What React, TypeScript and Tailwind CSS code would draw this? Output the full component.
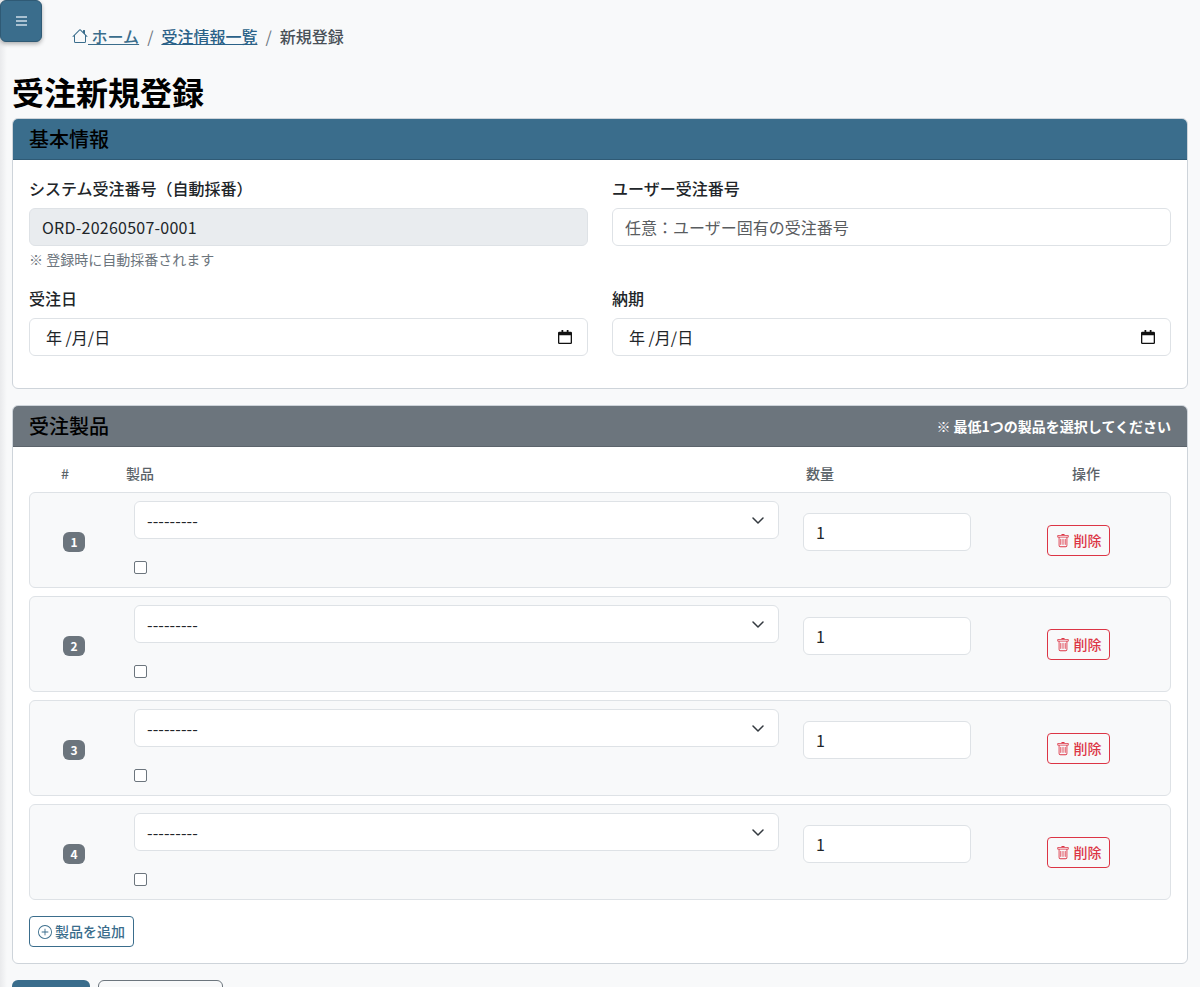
import { BsHouse, BsPlusCircle, BsTrash } from "react-icons/bs"

const fieldClass =
  "block w-full h-[38px] rounded-[6px] border border-[#dee2e6] px-[12px] text-[16px] text-[#212529] outline-none"
const inputClass = `${fieldClass} bg-white`

function DateField({ label }: { label: string }) {
  return (
    <div>
      <div className="mb-[9px] text-[16px] leading-[22px] font-medium text-[#212529]">{label}</div>
      <div className={`${inputClass} flex items-center justify-between`}>
        <span className="pl-[4px]">年 /月/日</span>
        <svg viewBox="0 0 16 16" className="mr-[3px] h-[14px] w-[14px]" fill="#111">
          <path d="M4 0h2v2h4V0h2v2h2.500A1.500 1.500 0 0 1 16 3.500v11a1.500 1.500 0 0 1-1.500 1.500h-13A1.500 1.500 0 0 1 0 14.500v-11A1.500 1.500 0 0 1 1.500 2H4V0zM1.500 6v8.500h13V6h-13z" />
        </svg>
      </div>
    </div>
  )
}

function ProductRow({ n }: { n: number }) {
  return (
    <div className="flex h-[96px] rounded-[6px] border border-[#dee2e6] bg-[#f8f9fa]">
      <div className="flex w-[88px] items-center justify-center pt-[4px]">
        <span className="flex h-[20px] w-[22px] items-center justify-center rounded-[6px] bg-[#6c757d] text-[12px] font-bold text-white">
          {n}
        </span>
      </div>
      <div className="ml-[16px] w-[645px] pt-[8px]">
        <div className="relative">
          <select className={`${inputClass} appearance-none tracking-[0.1px]`} defaultValue="">
            <option value="">---------</option>
          </select>
          <svg
            viewBox="0 0 16 16"
            className="pointer-events-none absolute right-[13px] top-[11px] h-[16px] w-[16px]"
            fill="none"
            stroke="#343a40"
            strokeWidth="1.500"
            strokeLinecap="round"
            strokeLinejoin="round"
          >
            <path d="m3 6 5 5 5-5" />
          </svg>
        </div>
        <input
          type="checkbox"
          className="mt-[22px] block h-[13px] w-[13px] appearance-none rounded-[2px] border border-[#6c757d] bg-white"
        />
      </div>
      <div className="ml-[24px] w-[168px] pt-[20px]">
        <input type="number" defaultValue={1} className={`${inputClass} appearance-none`} />
      </div>
      <div className="ml-[76px] pt-[32px]">
        <button className="flex h-[31px] w-[63px] items-center justify-center gap-[4px] rounded-[4px] border border-[#dc3545] text-[14px] font-medium text-[#dc3545]">
          <BsTrash className="h-[14px] w-[14px]" />
          削除
        </button>
      </div>
    </div>
  )
}

export default function App() {
  return (
    <div
      className="relative min-h-[987px] overflow-hidden bg-[#f8f9fa] px-[12px] text-[#212529]"
      style={{ fontFamily: '"Noto Sans CJK JP", "Noto Sans", sans-serif' }}
    >
      {/* sidebar shadow + toggle */}
      <div className="absolute left-0 top-0 h-full w-[7px] bg-gradient-to-r from-[#e9eaec] to-[#f8f9fa]" />
      <button className="absolute left-0 top-0 flex h-[42px] w-[42px] items-center justify-center rounded-[6px] border border-[#2f5a75] bg-[#3a6d8c] text-[#a9c1d1] shadow-[0_2px_4px_rgba(0,0,0,0.3)]">
        <span className="flex w-[11px] flex-col gap-[2px]">
          <span className="h-[2px] bg-[#a9c1d1]" />
          <span className="h-[2px] bg-[#a9c1d1]" />
          <span className="h-[2px] bg-[#a9c1d1]" />
        </span>
      </button>

      <nav className="relative flex h-[72px] items-center pl-[60px] text-[16px]">
        <a className="flex items-center font-medium text-[#3a6d8c] underline">
          <BsHouse className="h-[16px] w-[16px]" />
          <span>&nbsp;ホーム</span>
        </a>
        <span className="px-[8px] text-[#6c757d]">/</span>
        <a className="font-medium text-[#2a6188] underline">受注情報一覧</a>
        <span className="px-[8px] text-[#6c757d]">/</span>
        <span className="font-medium text-[#495057]">新規登録</span>
      </nav>

      <h1 className="relative h-[46px] text-[32px] leading-[38px] font-bold text-black">受注新規登録</h1>

      <section className="relative h-[271px] overflow-hidden rounded-[6px] border border-[#ced4da] bg-white">
        <div className="flex h-[41px] items-center border-b border-[#2f5a75] bg-[#3a6d8c] px-[16px]">
          <h2 className="text-[20px] font-medium text-black">基本情報</h2>
        </div>
        <div className="grid grid-cols-2 gap-x-[24px] px-[16px] pt-[17px]">
          <div>
            <div className="mb-[9px] text-[16px] leading-[22px] font-medium">システム受注番号（自動採番）</div>
            <div className={`${fieldClass} flex items-center bg-[#e9ecef] tracking-[0.24px]`}>ORD-20260507-0001</div>
            <div className="mt-[3px] text-[14px] leading-[20px] text-[#6c757d]">※ 登録時に自動採番されます</div>
          </div>
          <div>
            <div className="mb-[9px] text-[16px] leading-[22px] font-medium">ユーザー受注番号</div>
            <input className={`${inputClass} placeholder:text-[#595c5f]`} placeholder="任意：ユーザー固有の受注番号" />
          </div>
          <div className="mt-[18px]">
            <DateField label="受注日" />
          </div>
          <div className="mt-[18px]">
            <DateField label="納期" />
          </div>
        </div>
      </section>

      <section className="relative mt-[16px] h-[559px] overflow-hidden rounded-[6px] border border-[#ced4da] bg-white">
        <div className="flex h-[41px] items-center justify-between border-b border-[#5c646c] bg-[#6c757d] px-[16px]">
          <h2 className="text-[20px] font-medium text-black">受注製品</h2>
          <span className="text-[14px] font-bold text-white">※ 最低1つの製品を選択してください</span>
        </div>
        <div className="px-[16px]">
          <div className="flex h-[45px] items-center pt-[7px] text-[14px] font-medium leading-[20px] text-[#5a6268]">
            <span className="w-[72px] text-center">#</span>
            <span className="ml-[25px] w-[680px]">製品</span>
            <span className="w-[266px]">数量</span>
            <span>操作</span>
          </div>
          <div className="flex flex-col gap-[8px]">
            {[1, 2, 3, 4].map((n) => (
              <ProductRow key={n} n={n} />
            ))}
          </div>
          <button className="mt-[16px] flex h-[31px] w-[105px] items-center justify-center gap-[3px] rounded-[4px] border border-[#3a6d8c] text-[14px] font-medium text-[#3a6d8c]">
            <BsPlusCircle className="h-[14px] w-[14px]" />
            製品を追加
          </button>
        </div>
      </section>

      <div className="relative mt-[16px] flex gap-[8px]">
        <button className="h-[38px] w-[78px] rounded-[6px] bg-[#3a6d8c]" />
        <button className="h-[38px] w-[125px] rounded-[6px] border border-[#6c757d]" />
      </div>
    </div>
  )
}
